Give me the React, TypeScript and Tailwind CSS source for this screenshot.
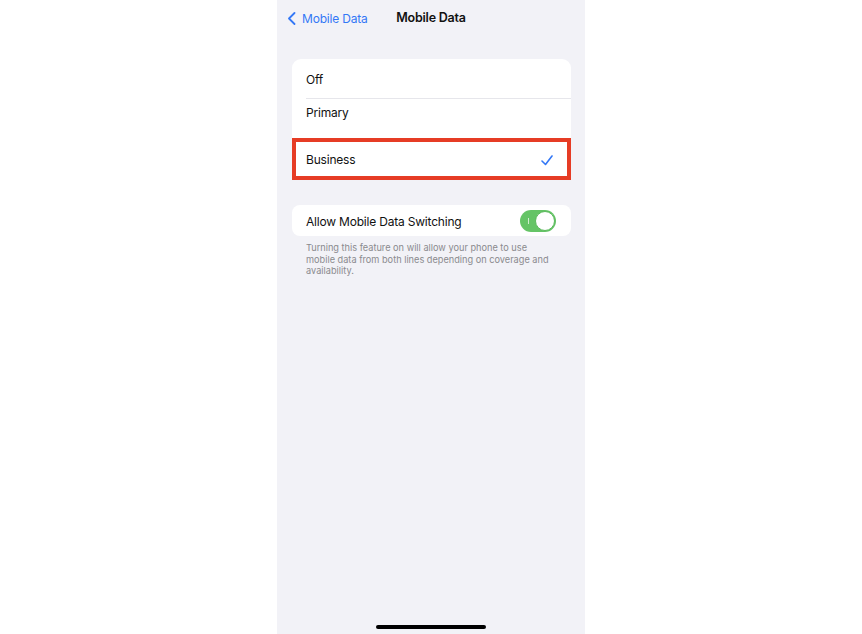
import React from "react";

export default function App() {
  return (
    <div className="w-full h-[634px] bg-white flex justify-center" style={{ fontFamily: "Inter, 'Liberation Sans', sans-serif" }}>
      <div className="w-[308px] h-[634px] bg-[#f2f2f7] flex flex-col">
        {/* Header */}
        <div className="h-[35px] pt-[2px] grid grid-cols-[1fr_auto_1fr] items-center">
          <div className="flex items-center pl-[10px] text-[#3478f6]">
            <svg width="9" height="13" viewBox="0 0 9 13" className="mr-[6px]">
              <polyline points="7.5,1 2,6.5 7.5,12" fill="none" stroke="#3478f6" strokeWidth="1.8" strokeLinecap="round" strokeLinejoin="round" />
            </svg>
            <span className="text-[12px] tracking-[-0.2px]">Mobile Data</span>
          </div>
          <div className="text-[12.5px] font-semibold text-[#111] tracking-[-0.2px]">Mobile Data</div>
          <div />
        </div>

        {/* Selection card */}
        <div className="mt-[24px] ml-[15px] mr-[14px] bg-white rounded-[9px] flex flex-col text-[12px] tracking-[-0.2px] text-[#111]">
          <div className="h-[39px] flex items-center pl-[14px] pt-[3px]">Off</div>
          <div className="h-px bg-[#e6e6eb] ml-[14px]" />
          <div className="h-[39px] pl-[14px] pt-[5px]">Primary</div>
          <div className="h-[42px] border-4 border-[#e63c25] flex items-center justify-between pl-[10px] pr-[14px] pt-[2px]">
            <span>Business</span>
            <svg width="12" height="11" viewBox="0 0 12 11">
              <polyline points="1,6 4.5,9.5 11,1" fill="none" stroke="#3478f6" strokeWidth="1.6" strokeLinecap="round" strokeLinejoin="round" />
            </svg>
          </div>
        </div>

        {/* Toggle card */}
        <div className="mt-[25px] ml-[15px] mr-[14px] h-[31px] bg-white rounded-[8px] flex items-center justify-between pl-[14px] pr-[15px] text-[12px] tracking-[-0.2px] text-[#111]">
          <span className="pt-[3px]">Allow Mobile Data Switching</span>
          <div className="relative w-[36px] h-[22px] rounded-full bg-[#65c466] flex items-center justify-end pr-[1px]">
            <div className="absolute left-[8px] top-[8px] w-px h-[6px] bg-white/70" />
            <div className="w-[20px] h-[20px] rounded-full bg-white border border-[#5bb95c]" />
          </div>
        </div>

        {/* Footer text */}
        <div className="mt-[6px] pl-[29px] pr-[20px] text-[9.2px] leading-[11.5px] text-[#8a8a8e]">
          Turning this feature on will allow your phone to use
          <br />
          mobile data from both lines depending on coverage and
          <br />
          availability.
        </div>

        <div className="flex-1" />
        <div className="flex justify-center pb-[5px]">
          <div className="w-[110px] h-[4px] rounded-full bg-black" />
        </div>
      </div>
    </div>
  );
}
